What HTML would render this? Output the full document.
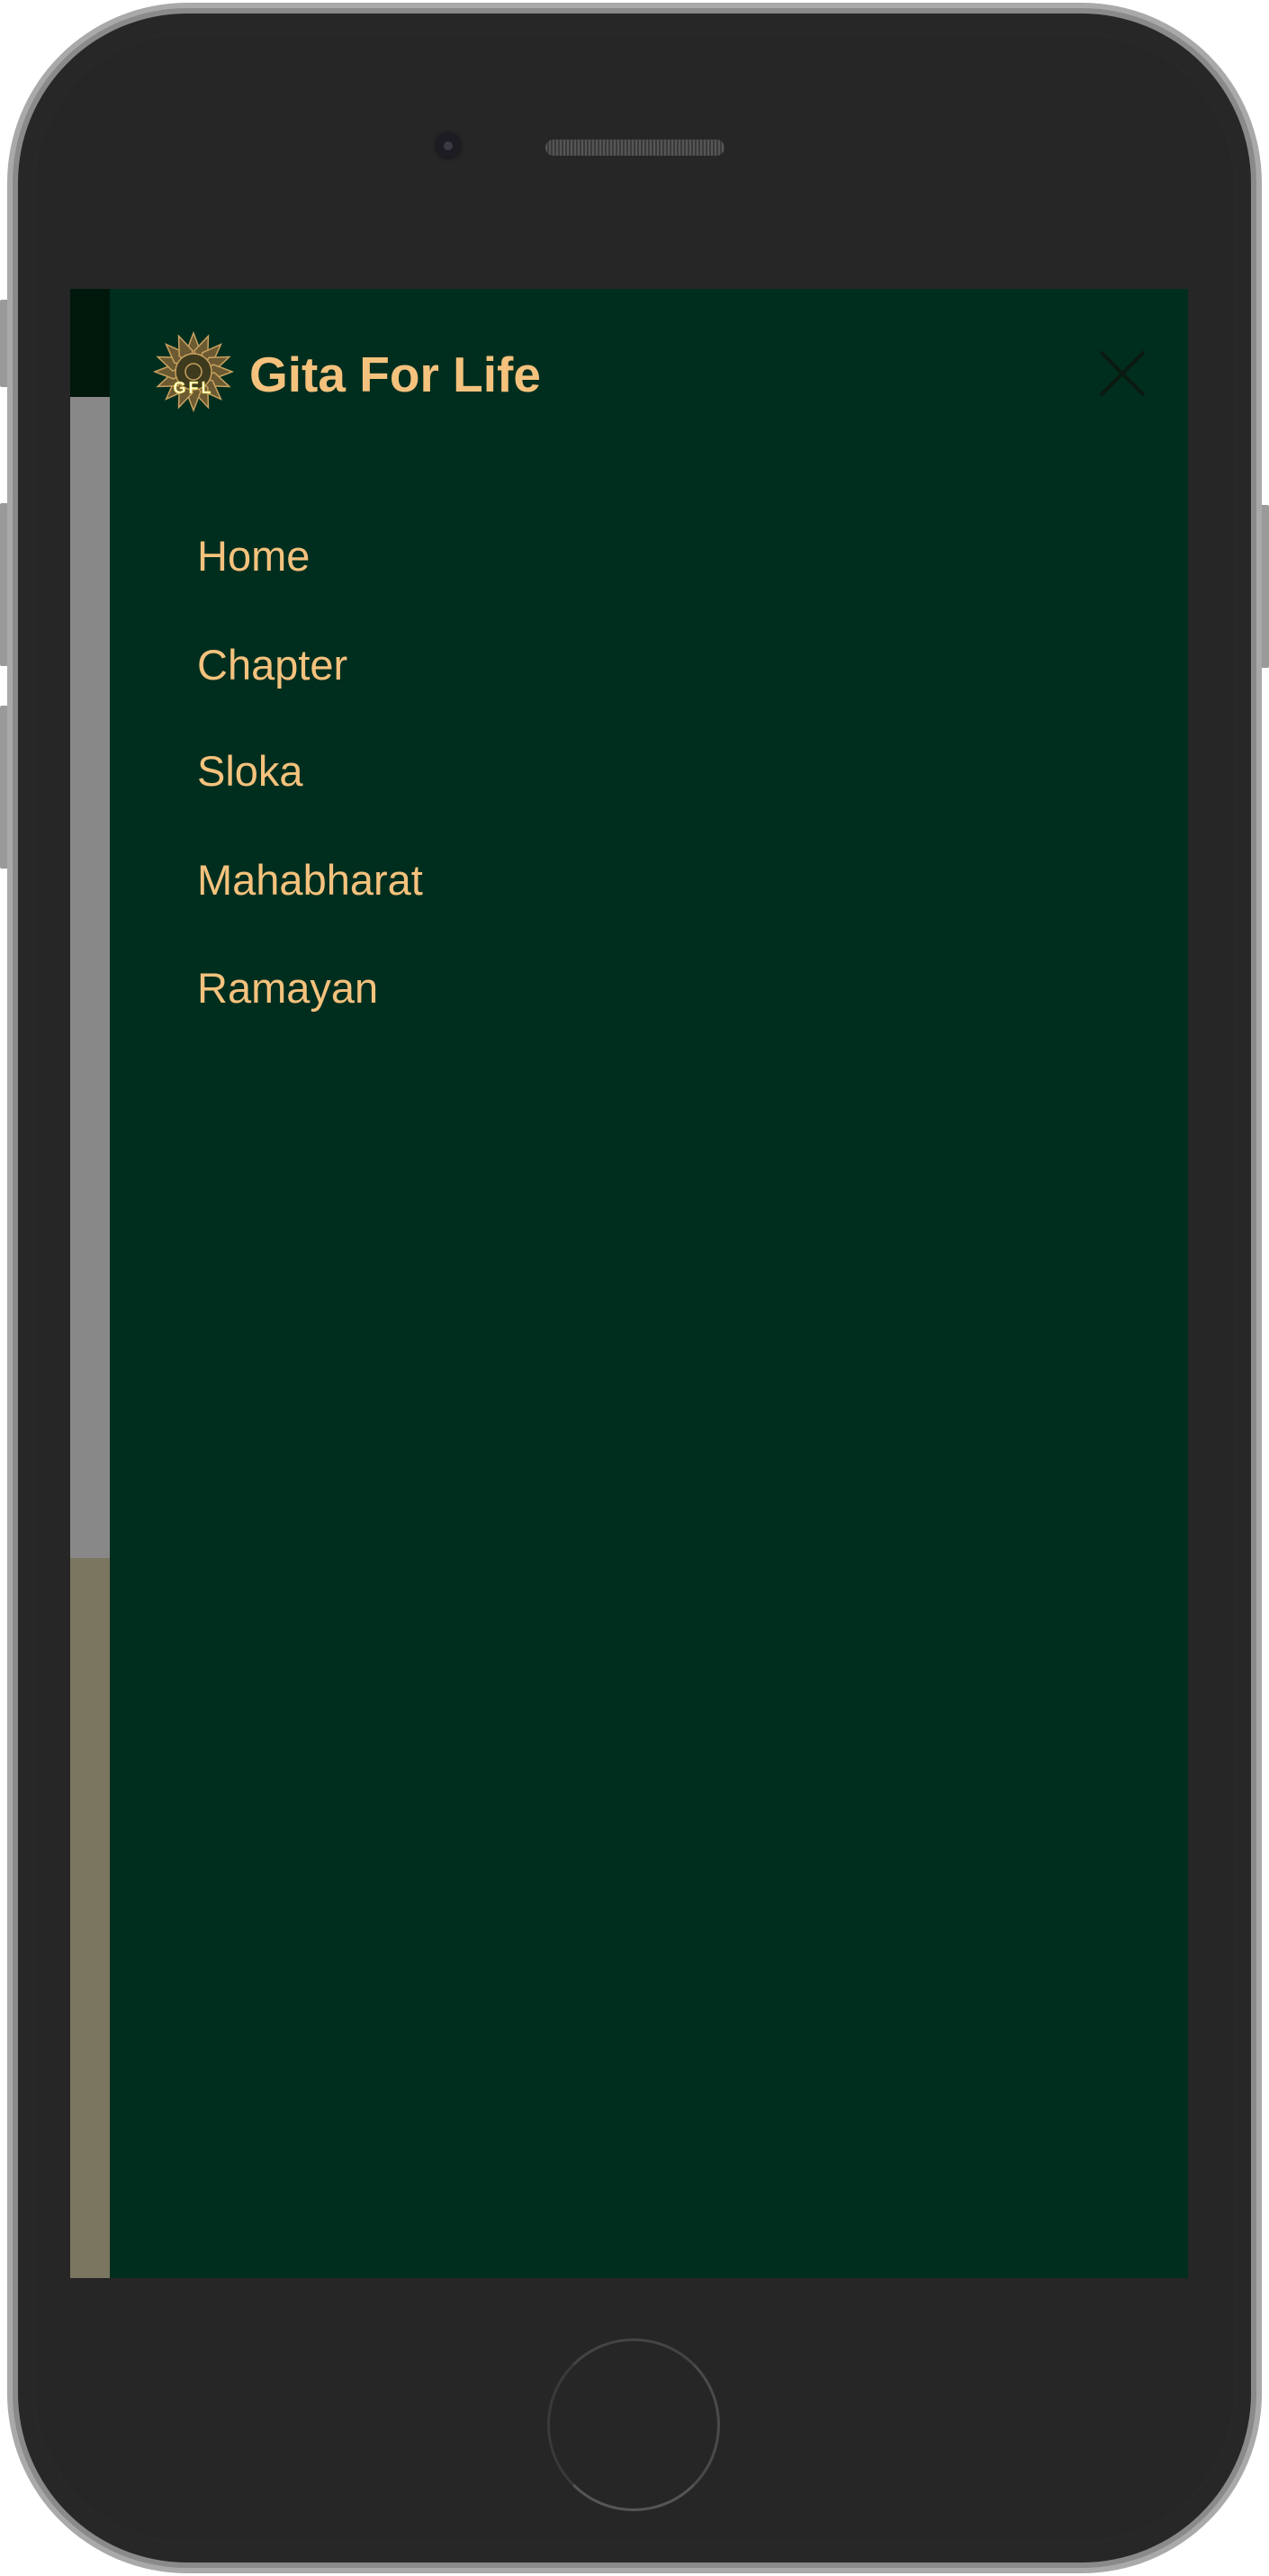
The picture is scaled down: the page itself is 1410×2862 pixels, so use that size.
<!DOCTYPE html>
<html><head><meta charset="utf-8">
<style>
html,body{margin:0;padding:0;background:#fff;}
body{width:1410px;height:2862px;position:relative;overflow:hidden;font-family:"Liberation Sans",sans-serif;}
.abs{position:absolute;}
.outer{left:8px;top:3px;width:1394px;height:2856px;border-radius:200px;background:#a9a9a9;}
.outer2{left:14px;top:9px;width:1382px;height:2844px;border-radius:194px;background:#8a8a8a;}
.body{left:20px;top:15px;width:1370px;height:2832px;border-radius:188px;background:#272727;}
.inner{left:36px;top:36px;width:1338px;height:2790px;border-radius:170px;background:#262626;box-shadow:inset 0 0 8px #2e2e2e;}
.btn{background:#9a9a9a;width:10px;border-radius:2px;}
.screen{left:78px;top:321px;width:1242px;height:2210px;background:#002e1e;}
.strip1{left:78px;top:321px;width:44px;height:120px;background:#00170c;}
.strip2{left:78px;top:441px;width:44px;height:1290px;background:#888;}
.strip3{left:78px;top:1731px;width:44px;height:800px;background:#7a7660;}
.title{left:277px;top:381px;font-size:55px;font-weight:bold;color:#f5c27d;line-height:70px;white-space:nowrap;}
.menu{left:219px;color:#f5c27d;font-size:47px;line-height:60px;}
</style></head><body>
<div class="abs btn" style="left:0;top:333px;height:97px"></div>
<div class="abs btn" style="left:0;top:559px;height:181px"></div>
<div class="abs btn" style="left:0;top:784px;height:181px"></div>
<div class="abs btn" style="left:1400px;top:561px;height:181px"></div>
<div class="abs outer"></div>
<div class="abs outer2"></div>
<div class="abs body"></div>
<div class="abs inner"></div>
<div class="abs" style="left:484px;top:148px;width:28px;height:28px;border-radius:50%;background:#1c1c22;box-shadow:0 0 4px #111"></div>
<div class="abs" style="left:493px;top:157px;width:10px;height:10px;border-radius:50%;background:#3a3a44"></div>
<div class="abs" style="left:606px;top:155px;width:199px;height:18px;border-radius:9px;background:repeating-linear-gradient(90deg,#555 0 2px,#3a3a3a 2px 4px);"></div>
<div class="abs" style="left:608px;top:2598px;width:192px;height:192px;border-radius:50%;border:3px solid transparent;box-sizing:border-box;border-left-color:#3a3a3a;border-bottom-color:#555;border-top-color:#444;border-right-color:#4a4a4a"></div>
<div class="abs screen"></div>
<div class="abs strip1"></div>
<div class="abs strip2"></div>
<div class="abs strip3"></div>
<svg class="abs" style="left:170px;top:368px" width="90" height="90" viewBox="-45 -45 90 90">
<g fill="#6b5a32" stroke="#c9a15f" stroke-width="1.5">
<g id="p"><path d="M0,-43 L8,-22 L0,-10 L-8,-22 Z"/></g>
<use href="#p" transform="rotate(22.5)"/><use href="#p" transform="rotate(45)"/><use href="#p" transform="rotate(67.5)"/><use href="#p" transform="rotate(90)"/><use href="#p" transform="rotate(112.5)"/><use href="#p" transform="rotate(135)"/><use href="#p" transform="rotate(157.5)"/><use href="#p" transform="rotate(180)"/><use href="#p" transform="rotate(202.5)"/><use href="#p" transform="rotate(225)"/><use href="#p" transform="rotate(247.5)"/><use href="#p" transform="rotate(270)"/><use href="#p" transform="rotate(292.5)"/><use href="#p" transform="rotate(315)"/><use href="#p" transform="rotate(337.5)"/>
<circle r="20" fill="#3d3a1e"/><circle r="9" fill="none"/>
</g>
<text x="0" y="24" text-anchor="middle" font-family="Liberation Sans" font-weight="bold" font-size="18" fill="#fffbd0" stroke="#e8d040" stroke-width="0.5" letter-spacing="3">GFL</text>
</svg>
<div class="abs title">Gita For Life</div>
<svg class="abs" style="left:1221px;top:389px" width="52" height="52" viewBox="0 0 52 52"><path d="M3,3 L49,49 M49,3 L3,49" stroke="#0b1a10" stroke-width="4" stroke-linecap="round"/></svg>
<div class="abs menu" style="top:588px">Home</div>
<div class="abs menu" style="top:709px">Chapter</div>
<div class="abs menu" style="top:827px">Sloka</div>
<div class="abs menu" style="top:948px">Mahabharat</div>
<div class="abs menu" style="top:1068px">Ramayan</div>
</body></html>
